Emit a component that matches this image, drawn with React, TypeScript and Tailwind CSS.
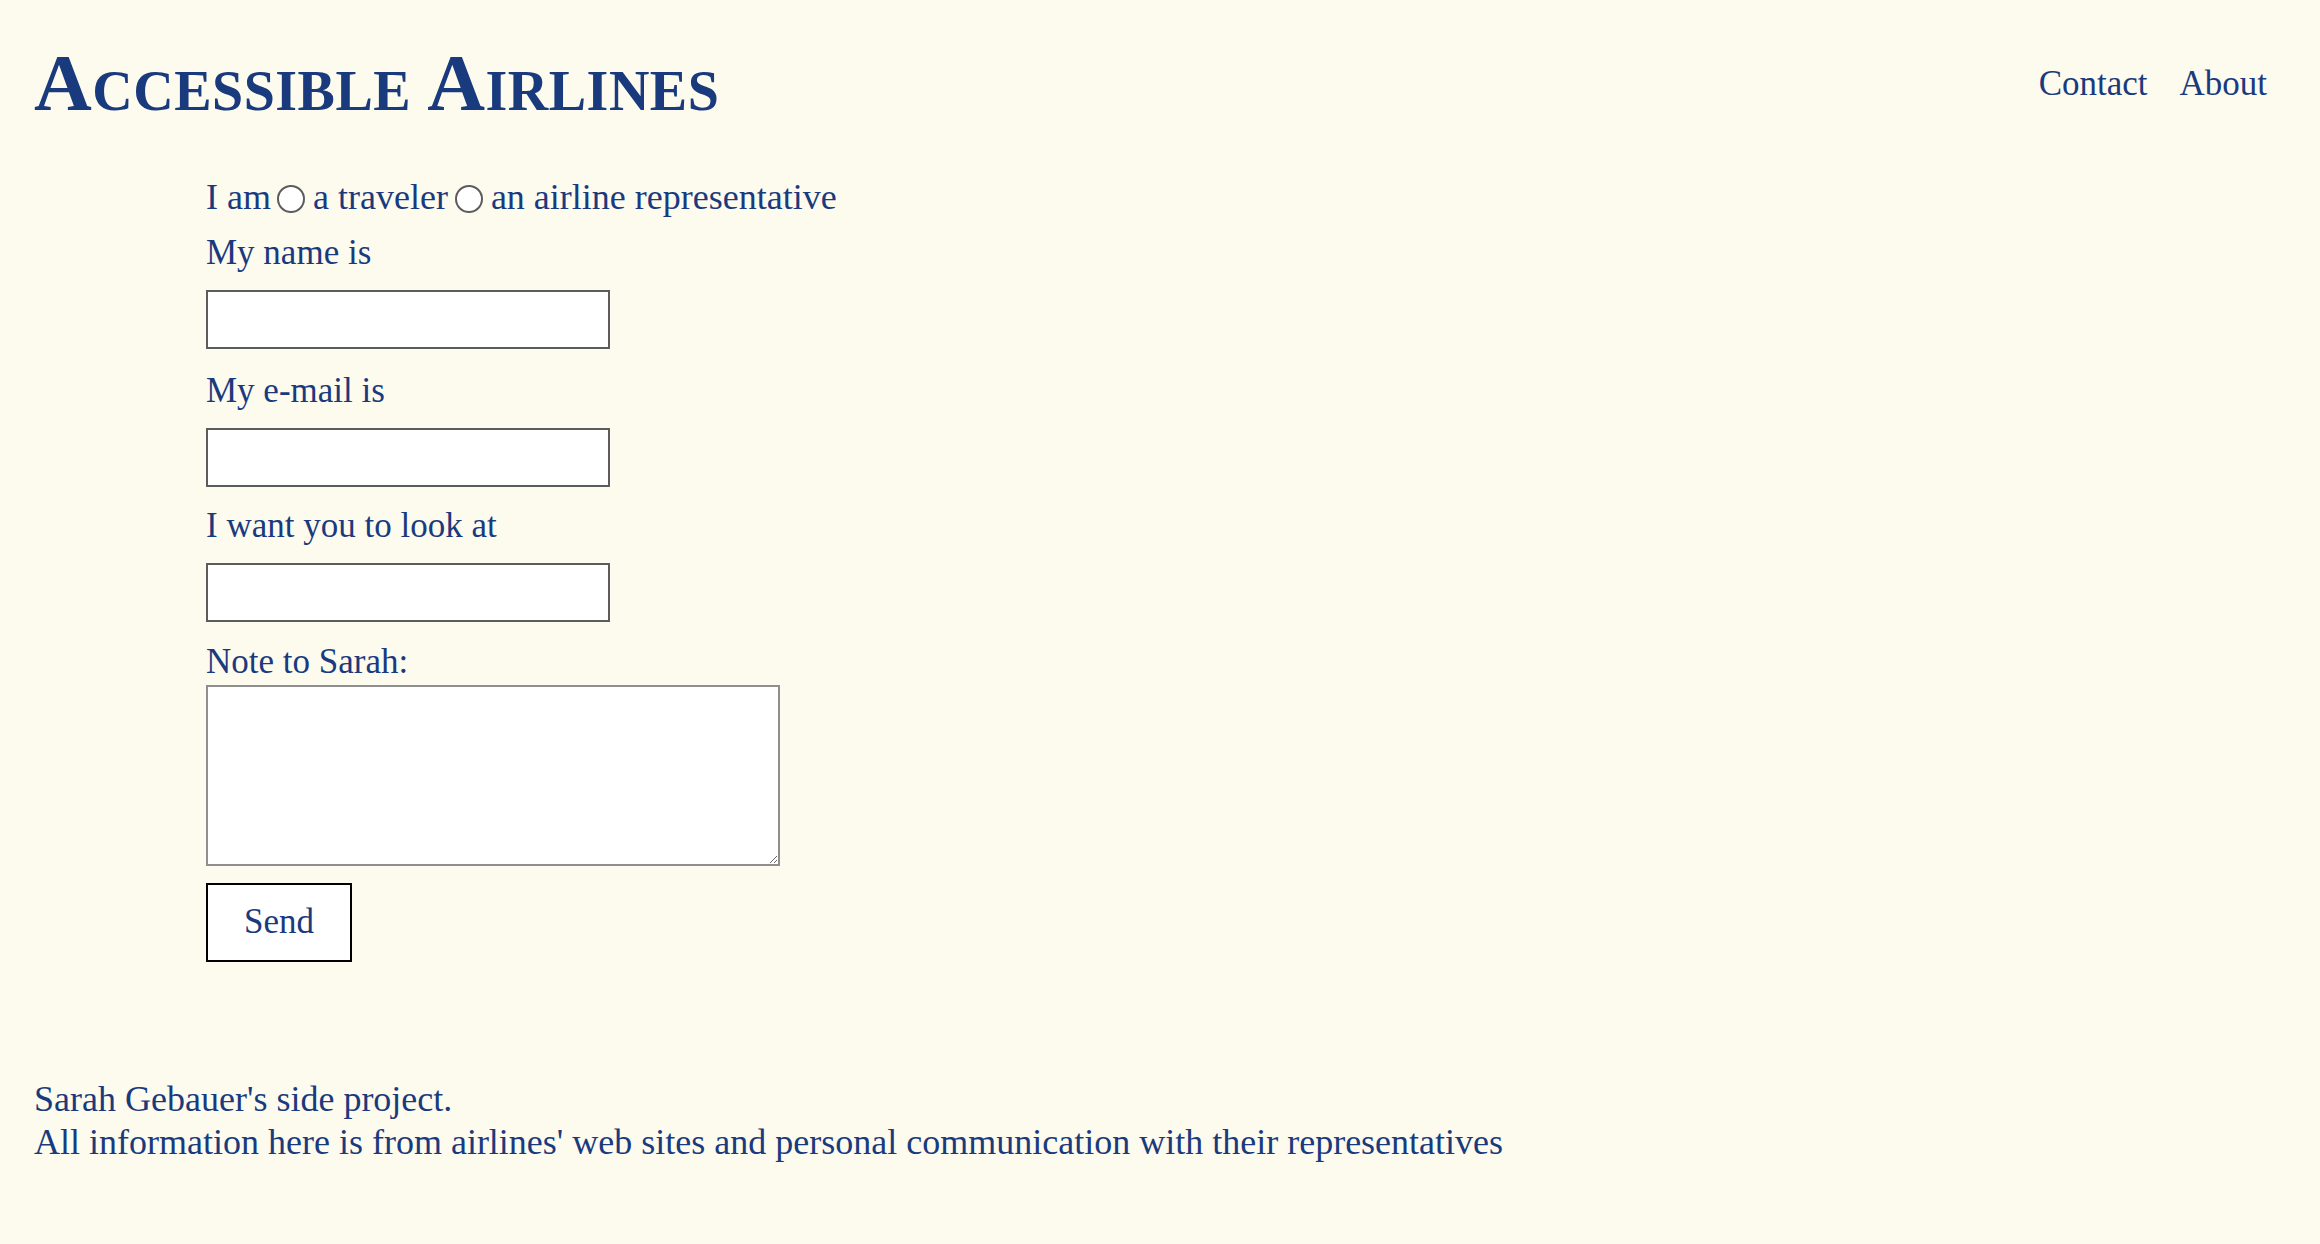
const serif = "font-['Liberation_Serif','Times_New_Roman',serif]"

function Field({ label, mt }: { label: string; mt: string }) {
  return (
    <>
      <label className={`block leading-[43px] ${mt}`}>{label}</label>
      <input
        type="text"
        className="block mt-[16px] w-[404px] h-[59px] bg-white border-2 border-[#5c5c5c] outline-none"
      />
    </>
  )
}

export default function App() {
  return (
    <div className={`min-h-screen bg-[#fdfbee] text-[#1a3a7e] ${serif} text-[35px]`}>
      {/* Header */}
      <header className="flex justify-between items-start pl-[34px] pr-[53px] pt-[43px]">
        <h1 className="text-[80px] leading-[80px] font-bold tracking-[0.5px] [font-variant-caps:small-caps]">
          Accessible Airlines
        </h1>
        <nav className="flex gap-[32px] mt-[19px] leading-[43px]">
          <a href="#contact">Contact</a>
          <a href="#about">About</a>
        </nav>
      </header>

      {/* Contact form */}
      <form className="pl-[206px] mt-[53px]" onSubmit={(e) => e.preventDefault()}>
        <div className="flex items-center leading-[43px] text-[36px]">
          <span>I am</span>
          <input
            type="radio"
            name="role"
            className="appearance-none w-[28px] h-[28px] rounded-full bg-white border-2 border-[#5c5c5c] ml-[6px] mr-[8px] mt-[3px]"
          />
          <span>a traveler</span>
          <input
            type="radio"
            name="role"
            className="appearance-none w-[28px] h-[28px] rounded-full bg-white border-2 border-[#5c5c5c] ml-[7px] mr-[8px] mt-[3px]"
          />
          <span>an airline representative</span>
        </div>

        <Field label="My name is" mt="mt-[12px]" />
        <Field label="My e-mail is" mt="mt-[20px]" />
        <Field label="I want you to look at" mt="mt-[17px]" />

        <label className="block leading-[43px] mt-[18px]">Note to Sarah:</label>
        <textarea className="block mt-[2px] w-[574px] h-[181px] bg-white border-2 border-[#8f8f8f] outline-none" />

        <button
          type="submit"
          className="block mt-[17px] w-[146px] h-[79px] bg-white border-2 border-black text-[35px]"
        >
          Send
        </button>
      </form>

      {/* Footer */}
      <footer className="pl-[34px] mt-[116px] leading-[43px] text-[36px]">
        <p>Sarah Gebauer's side project.</p>
        <p>All information here is from airlines' web sites and personal communication with their representatives</p>
      </footer>
    </div>
  )
}
